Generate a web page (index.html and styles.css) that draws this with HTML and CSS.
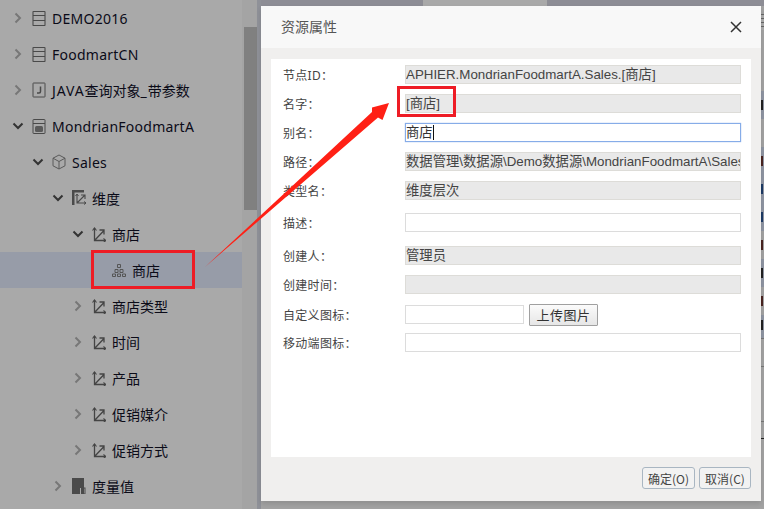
FILE: index.html
```html
<!DOCTYPE html>
<html lang="zh">
<head>
<meta charset="utf-8">
<title>资源属性</title>
<link rel="stylesheet" href="styles.css">
</head>
<body>
<svg class="sprites" width="0" height="0" aria-hidden="true">
  <symbol id="i-right" viewBox="0 0 12 12"><path d="M3.5 1.5 8 6l-4.500 4.500" fill="none" stroke="#777" stroke-width="2"/></symbol>
  <symbol id="i-down" viewBox="0 0 12 12"><path d="M1.500 3.500 6 8l4.500-4.500" fill="none" stroke="#333" stroke-width="2"/></symbol>
  <symbol id="i-db" viewBox="0 0 14 16"><path d="M1.500 1.500h11a.5.5 0 0 1 .5.500v13a.5.5 0 0 1-.5.500h-11a.5.5 0 0 1-.5-.500V2a.5.5 0 0 1 .5-.500ZM1 5.500h12M1 10.500h12" fill="none" stroke="#4a4a4a" stroke-width="1.100"/></symbol>
  <symbol id="i-java" viewBox="0 0 14 16"><path d="M3 1h-1.500a.5.500 0 0 0-.5.500v13a.5.500 0 0 0 .5.500H3M11 1h1.500a.5.500 0 0 1 .5.500v13a.5.500 0 0 1-.5.500H11M3 1h8M3 15h8" fill="none" stroke="#4a4a4a"/><path d="M8.500 4.500V9.500q0 1.500-1.500 1.500H5" fill="none" stroke="#4a4a4a" stroke-width="1.500"/></symbol>
  <symbol id="i-olap" viewBox="0 0 14 16"><path d="M1.500 1.500h11a.5.500 0 0 1 .5.500v13a.5.500 0 0 1-.5.500h-11a.5.500 0 0 1-.5-.500V2a.5.500 0 0 1 .5-.500ZM1 5.500h12" fill="none" stroke="#4a4a4a"/><rect x="3" y="8" width="8" height="6" rx="1.500" fill="#5a5a5a"/></symbol>
  <symbol id="i-cube" viewBox="0 0 14 16"><path d="M7 1 13 4.200v7.600L7 15 1 11.800V4.200ZM1 4.200 7 7.500l6-3.300M7 7.500V15" fill="none" stroke="#5a5a5a"/></symbol>
  <symbol id="i-dims" viewBox="0 0 14 16"><path d="M0 0h12v2.500H2.500V15H0Z" fill="#4a4a4a"/><path d="M5 4.500V13h9M5 13l7.500-7.500M9 5h4v4" fill="none" stroke="#4a4a4a" stroke-width="1.100"/><path d="M3.500 6 5 4l1.500 2M12 11.500l2 1.500-2 1.500" fill="none" stroke="#4a4a4a"/></symbol>
  <symbol id="i-dim" viewBox="0 0 14 16"><path d="M2.500 2V14.500H13.500M2.500 14.500 12 4.500M7.500 4H12V8.500" fill="none" stroke="#444" stroke-width="1.300"/><path d="M.5 4.500 2.500 2l2 2.500M11.500 12.500l2.300 2-2.300 2" fill="none" stroke="#444" stroke-width="1.100"/></symbol>
  <symbol id="i-tree" viewBox="0 0 14 16"><path d="M5.500 2.500h3v3h-3ZM3 7.500h3v3H3ZM8 7.500h3v3H8ZM.5 12h3v2.500h-3ZM5.500 12h3v2.500h-3ZM10.500 12h3v2.500h-3Z" fill="none" stroke="#555"/></symbol>
  <symbol id="i-measures" viewBox="0 0 14 16"><path d="M0 0h12v16H9.500V10H8v6H0Z" fill="#4a4a4a"/><rect x="9.500" y="10" width="3.500" height="6" fill="none" stroke="#4a4a4a"/></symbol>
</svg>

<div class="stage">
  <nav class="tree">
    <div class="row lv0 latin"><svg class="chev"><use href="#i-right"/></svg><svg class="ico"><use href="#i-db"/></svg><span>DEMO2016</span></div>
    <div class="row lv0 latin"><svg class="chev"><use href="#i-right"/></svg><svg class="ico"><use href="#i-db"/></svg><span>FoodmartCN</span></div>
    <div class="row lv0"><svg class="chev"><use href="#i-right"/></svg><svg class="ico"><use href="#i-java"/></svg><span><span class="java">JAVA</span>查询对象<span class="java">_</span>带参数</span></div>
    <div class="row lv0 latin"><svg class="chev"><use href="#i-down"/></svg><svg class="ico"><use href="#i-olap"/></svg><span>MondrianFoodmartA</span></div>
    <div class="row lv1 latin"><svg class="chev"><use href="#i-down"/></svg><svg class="ico"><use href="#i-cube"/></svg><span>Sales</span></div>
    <div class="row lv2"><svg class="chev"><use href="#i-down"/></svg><svg class="ico"><use href="#i-dims"/></svg><span>维度</span></div>
    <div class="row lv3"><svg class="chev"><use href="#i-down"/></svg><svg class="ico"><use href="#i-dim"/></svg><span>商店</span></div>
    <div class="row lv4 selected"><span class="chev"></span><svg class="ico"><use href="#i-tree"/></svg><span>商店</span></div>
    <div class="row lv3"><svg class="chev"><use href="#i-right"/></svg><svg class="ico"><use href="#i-dim"/></svg><span>商店类型</span></div>
    <div class="row lv3"><svg class="chev"><use href="#i-right"/></svg><svg class="ico"><use href="#i-dim"/></svg><span>时间</span></div>
    <div class="row lv3"><svg class="chev"><use href="#i-right"/></svg><svg class="ico"><use href="#i-dim"/></svg><span>产品</span></div>
    <div class="row lv3"><svg class="chev"><use href="#i-right"/></svg><svg class="ico"><use href="#i-dim"/></svg><span>促销媒介</span></div>
    <div class="row lv3"><svg class="chev"><use href="#i-right"/></svg><svg class="ico"><use href="#i-dim"/></svg><span>促销方式</span></div>
    <div class="row lv2"><svg class="chev"><use href="#i-right"/></svg><svg class="ico"><use href="#i-measures"/></svg><span>度量值</span></div>
  </nav>
  <div class="track"><div class="thumb"></div></div>
  <div class="rest">
    <div class="rest-top"><span class="tab"></span></div>
    <div class="rest-main">
      <div class="edge">
        <div class="e-lines"></div>
        <div class="e-row band c-d"></div>
        <div class="e-row blank"></div>
        <div class="e-row band c-r"></div>
        <div class="e-row band c-b"></div>
        <div class="e-row band c-b"></div>
        <div class="e-row c-r"></div>
        <div class="e-row band c-d"></div>
        <div class="e-row c-r"></div>
        <div class="e-row band c-d e-last"></div>
        <div class="e-rule e-27"></div>
        <div class="e-rule e-54"></div>
        <div class="e-v"></div>
      </div>
    </div>
  </div>
</div>

<section class="dialog">
  <header class="dialog-head">
    <h1 class="dialog-title">资源属性</h1>
    <svg class="close" width="12" height="12" viewBox="0 0 12 12"><path d="M1 1l10 10M11 1 1 11" stroke="#333" stroke-width="1.500" fill="none"/></svg>
  </header>
  <div class="dialog-body">
    <form class="panel">
      <div class="f"><label>节点ID：</label><div class="field off">APHIER.MondrianFoodmartA.Sales.[商店]</div></div>
      <div class="f"><label>名字：</label><div class="field off">[商店]</div></div>
      <div class="f"><label>别名：</label><div class="field focus">商店<i class="caret"></i></div></div>
      <div class="f"><label>路径：</label><div class="field off">数据管理\数据源\Demo数据源\MondrianFoodmartA\Sales</div></div>
      <div class="f"><label>类型名：</label><div class="field off">维度层次</div></div>
      <div class="f gap13"><label>描述：</label><div class="field"></div></div>
      <div class="f gap14"><label>创建人：</label><div class="field off">管理员</div></div>
      <div class="f"><label>创建时间：</label><div class="field off"></div></div>
      <div class="f gap11"><label>自定义图标：</label><div class="field short"></div><button type="button" class="upload">上传图片</button></div>
      <div class="f gap9"><label>移动端图标：</label><div class="field"></div></div>
    </form>
    <footer class="dialog-foot">
      <button type="button" class="btn ok">确定(O)</button>
      <button type="button" class="btn">取消(C)</button>
    </footer>
  </div>
</section>

<svg class="marks" width="764" height="509" viewBox="0 0 764 509" aria-hidden="true">
  <rect x="92.500" y="251.500" width="101" height="36" fill="none" stroke="#ee1c25" stroke-width="3"/>
  <rect x="398.500" y="87.500" width="56" height="28" fill="none" stroke="#ee1c25" stroke-width="3"/>
  <polygon points="205,267 372,112 372,107.500 389,103 382.500,120 378,117.500" fill="#ff2015"/>
</svg>
</body>
</html>
```
FILE: styles.css
```css
* { box-sizing: border-box; }
html, body { margin: 0; padding: 0; }
body {
  width: 764px;
  height: 509px;
  overflow: hidden;
  position: relative;
  background: #a9a9a9;
  font-family: "Noto Sans", "Noto Sans CJK SC", sans-serif;
}
.sprites { position: absolute; }
.stage { display: flex; height: 509px; }

.tree { width: 242px; flex: none; }
.row {
  display: flex;
  align-items: center;
  height: 36px;
  font-size: 14px;
  color: #0b0b18;
  white-space: nowrap;
}
.latin { letter-spacing: .25px; }
.java { letter-spacing: .9px; }
.selected { background: #979ca8; }
.lv0 { padding-left: 12px; }
.lv1 { padding-left: 32px; }
.lv2 { padding-left: 52px; }
.lv3 { padding-left: 72px; }
.lv4 { padding-left: 92px; }
.chev { width: 12px; height: 12px; flex: none; margin-right: 8px; }
.ico { width: 14px; height: 16px; flex: none; margin-right: 6px; }

.track { width: 15px; flex: none; background: #a4a4a4; padding: 27px 0 0 2px; }
.thumb { width: 13px; height: 183px; background: #808080; }

.rest { flex: 1; display: flex; flex-direction: column; background: #a3a3a3; border-left: 4px solid #8f9198; }
.rest-top { height: 6px; flex: none; background: #8d8d95; padding-left: 162px; }
.tab { display: block; width: 124px; height: 6px; background: #a9a9a9; }
.rest-main { flex: 1; display: flex; justify-content: flex-end; }

/* Sliver of the page behind the dialog: only a few pixels of each row show. */
.edge { width: 3px; overflow: hidden; }
.e-lines {
  height: 77px;
  margin-top: 8px;
  background: repeating-linear-gradient(#666 0 1px, #aaa 1px 4px) 0 0 / 100% 16px no-repeat;
}
.e-row { height: 28px; padding-top: 9px; }
.e-row::before { content: ""; display: block; width: 2px; height: 10px; background: currentColor; }
.blank::before { display: none; }
.band { background: #8f95a3; }
.c-d { color: #222; }
.c-r { color: #4a2420; }
.c-b { color: #1c3a66; }
.e-last { height: 24px; padding-top: 5px; border-bottom: 1px solid #777; }
.e-rule { border-bottom: 1px solid #777; }
.e-27 { height: 28px; }
.e-54 { height: 55px; }
.e-v { height: 17px; border-bottom: 1px solid #222; }

.dialog {
  position: absolute;
  left: 261px;
  top: 6px;
  width: 500px;
  height: 495px;
  display: flex;
  flex-direction: column;
  background: #f0efee;
  box-shadow: 0 3px 5px rgba(0, 0, 0, .12);
}
.dialog-head {
  height: 42px;
  flex: none;
  display: flex;
  align-items: center;
  justify-content: space-between;
  padding: 0 19px 2px 20px;
  background: #f8f8f8;
}
.dialog-title { margin: 0; font-size: 14px; font-weight: 400; color: #555; }
.close { margin-top: 2px; }
.dialog-body { flex: 1; display: flex; flex-direction: column; padding: 11px 10px 0; }

.panel {
  height: 398px;
  flex: none;
  background: #fff;
  padding: 6px 10px 0 12px;
  display: flex;
  flex-direction: column;
  gap: 10px;
}
.f { display: flex; align-items: center; height: 19px; }
.gap13 { margin-top: 3px; }
.gap14 { margin-top: 4px; }
.gap11 { margin-top: 1px; }
.gap9 { margin-top: -1px; }
.f label { width: 122px; flex: none; font-size: 12px; color: #444; letter-spacing: .3px; }
.field {
  width: 336px;
  height: 19px;
  flex: none;
  border: 1px solid #dcdcdc;
  background: #fff;
  padding: 0;
  font: 13.330px/17px "Liberation Sans", "Noto Sans CJK SC", sans-serif;
  color: #333;
  white-space: nowrap;
  overflow: hidden;
}
.off { background: #e9e9e9; border-color: #dddcd8; color: #444; }
.focus { border-color: #86ace8; box-shadow: 0 0 1px #86ace8; }
.caret { display: inline-block; width: 1px; height: 15px; background: #111; vertical-align: -3px; }
.short { width: 119px; }
.upload {
  width: 69px;
  height: 22px;
  margin-left: 5px;
  flex: none;
  padding: 0;
  border: 1px solid #a0a0a0;
  border-radius: 1px;
  background: linear-gradient(#fbfbfb, #e6e6e6);
  font: 13px "Noto Sans CJK SC", sans-serif;
  letter-spacing: .5px;
  color: #333;
}

.dialog-foot { display: flex; justify-content: flex-end; gap: 4px; padding-top: 10px; }
.btn {
  width: 52px;
  height: 22px;
  padding: 0;
  border: 1px solid #a9b6c2;
  border-radius: 3px;
  background: #f2f2f2;
  font: 12px "Noto Sans CJK SC", sans-serif;
  color: #444;
}
.ok { width: 53px; }

.marks { position: absolute; left: 0; top: 0; pointer-events: none; }
```
